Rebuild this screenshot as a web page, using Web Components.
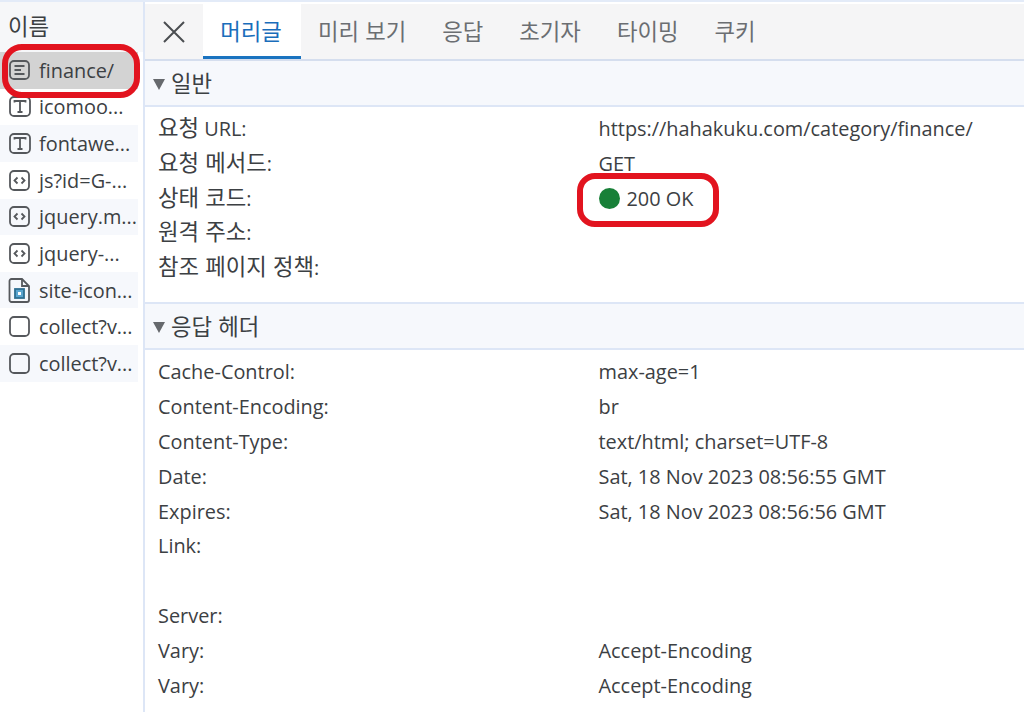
<!DOCTYPE html>
<html lang="ko">
<head>
<meta charset="utf-8">
<title>네트워크</title>
<style>
  html, body { margin: 0; height: 100%; background: #fff; overflow: hidden; }
  body { font-family: "Open Sans", "Noto Sans CJK KR", sans-serif; font-size: 19.9px; color: #3c4043; }
</style>
</head>
<body>
<net-panel></net-panel>

<script>
const ICONS = {
  doc: '<rect x="2" y="2" width="19" height="18" rx="4"/><path d="M6.5 7h10M6.5 11h6.500M6.5 15h10"/>',
  font: '<rect x="2" y="2" width="20" height="19" rx="4"/><path d="M6.5 7.500V6h11v1.500M12 6V17M9.500 17h5"/>',
  script: '<rect x="2" y="2" width="19" height="19" rx="4"/><path d="M9.500 8.500l-3 3 3 3M13.500 8.500l3 3-3 3"/>',
  blank: '<rect x="2" y="2" width="19" height="19" rx="4"/>',
  image: '<path d="M1.500 4a2 2 0 0 1 2-2h10.500l7 7v14a2 2 0 0 1-2 2H3.500a2 2 0 0 1-2-2z"/><path d="M14 2v7h7"/><rect x="7" y="12" width="9" height="9" fill="#5aa6d0" stroke="#2f6f91" stroke-width="1.800"/><rect x="10" y="15" width="3" height="3" fill="#fff" stroke="none"/>'
};

// hangul runs are set larger so they keep the proportions of the latin text
const ko = (s) => s.replace(/[\uac00-\ud7a3]+( [\uac00-\ud7a3]+)*/g, (m) => `<span class="ko">${m}</span>`);

class NetRow extends HTMLElement {
  constructor() {
    super();
    this.attachShadow({ mode: 'open' });
  }
  connectedCallback() {
    const icon = this.getAttribute('icon') || 'blank';
    const tall = icon === 'image';
    this.shadowRoot.innerHTML = `
      <style>
        :host { display: flex; align-items: center; gap: 8px; height: 36.65px; padding-left: 8px; box-sizing: border-box; white-space: nowrap; overflow: hidden; }
        :host([alt]) { background: #f6f8fc; }
        :host([selected]) { background: #d3d3d3; }
        svg { flex: none; fill: none; stroke: #55585c; stroke-width: 1.800; width: 23px; height: ${tall ? 27 : 23}px; }
      </style>
      <svg viewBox="0 0 23 ${tall ? 27 : 23}">${ICONS[icon]}</svg>
      <slot></slot>`;
  }
}
customElements.define('net-row', NetRow);

class NetTab extends HTMLElement {
  constructor() {
    super();
    this.attachShadow({ mode: 'open' });
    this.shadowRoot.innerHTML = `
      <style>
        :host { display: flex; align-items: center; justify-content: center; height: 100%; padding: 0 18px 4px; box-sizing: border-box; color: #6b6e72; font-family: "Noto Sans CJK KR", sans-serif; font-size: 22.300px; }
        :host([active]) { background: #fff; color: #1a6dbb; border-bottom: 3px solid #1a73c0; width: 98px; padding: 0 2px 1px 0; margin-right: -1px; position: relative; }
      </style>
      <slot></slot>`;
  }
}
customElements.define('net-tab', NetTab);

class NetSection extends HTMLElement {
  constructor() {
    super();
    this.attachShadow({ mode: 'open' });
    this.shadowRoot.innerHTML = `
      <style>
        :host { display: block; }
        .head { display: flex; align-items: center; gap: 6px; height: 42px; padding: 0 0 2px 8px; background: #f6f8fc; border-bottom: 2px solid #dde6f6; color: #3c4043; }
        .tri { width: 0; height: 0; border: 6.500px solid transparent; border-top: 11px solid #66696d; border-bottom: 0; margin-top: 5px; }
        .body { padding: 4px 0 0 13px; }
      </style>
      <div class="head"><span class="tri"></span><slot name="title"></slot></div>
      <div class="body"><slot></slot></div>`;
  }
}
customElements.define('net-section', NetSection);

class NetField extends HTMLElement {
  constructor() {
    super();
    this.attachShadow({ mode: 'open' });
    this.shadowRoot.innerHTML = `
      <style>
        :host { display: grid; grid-template-columns: 440.500px 1fr; align-items: center; height: 34.85px; white-space: nowrap; color: #3c4043; }
        .dot { display: inline-block; width: 21px; height: 21px; border-radius: 50%; background: #188038; margin-right: 7px; vertical-align: -3px; }
      </style>
      <div><slot name="k"></slot></div>
      <div id="v"><slot name="v"></slot></div>`;
  }
  connectedCallback() {
    if (this.hasAttribute('ok')) {
      const dot = document.createElement('span');
      dot.className = 'dot';
      this.shadowRoot.getElementById('v').prepend(dot);
    }
  }
}
customElements.define('net-field', NetField);

class NetPanel extends HTMLElement {
  constructor() {
    super();
    this.attachShadow({ mode: 'open' });
    const f = (k, v, extra) => `<net-field ${extra || ''}><span slot="k">${ko(k)}</span><span slot="v">${v}</span></net-field>`;
    this.shadowRoot.innerHTML = `
      <style>
        :host { display: grid; grid-template-columns: 145px 1fr; width: 1024px; height: 712px; overflow: hidden; position: relative; border-top: 2px solid #e3ebf8; box-sizing: border-box; }
        .side { border-right: 2px solid #dde6f6; padding-right: 5px; }
        .name { height: 50px; padding: 0 0 3px 8px; margin-right: -5px; box-sizing: border-box; background: #f6f7f9; display: flex; align-items: center; color: #3c4043; }
        .ko { font-family: "Noto Sans CJK KR", sans-serif; font-size: 22.300px; line-height: 1; }
        .main { min-width: 0; }
        .tabs { display: flex; align-items: stretch; height: 55px; margin-top: 2px; background: #f5f5f6; border-bottom: 2px solid #d5deee; }
        .close { flex: none; width: 58px; display: flex; align-items: center; justify-content: center; }
        .close svg { width: 26px; height: 26px; stroke: #4a4d51; stroke-width: 2; fill: none; }
        .gap { height: 17px; }
        .ring { position: absolute; border: 6px solid #e2141f; box-sizing: border-box; pointer-events: none; }
      </style>
      <div class="side">
        <div class="name"><span class="ko">이름</span></div>
        <net-row icon="doc" selected>finance/</net-row>
        <net-row icon="font">icomoo...</net-row>
        <net-row icon="font" alt>fontawe...</net-row>
        <net-row icon="script">js?id=G-...</net-row>
        <net-row icon="script" alt>jquery.m...</net-row>
        <net-row icon="script">jquery-...</net-row>
        <net-row icon="image" alt>site-icon...</net-row>
        <net-row icon="blank">collect?v...</net-row>
        <net-row icon="blank" alt>collect?v...</net-row>
      </div>
      <div class="main">
        <div class="tabs">
          <div class="close"><svg viewBox="0 0 26 26"><path d="M3 3l20 20M23 3L3 23"/></svg></div>
          <net-tab active>머리글</net-tab>
          <net-tab>미리 보기</net-tab>
          <net-tab>응답</net-tab>
          <net-tab>초기자</net-tab>
          <net-tab>타이밍</net-tab>
          <net-tab>쿠키</net-tab>
        </div>
        <net-section>
          <span slot="title" class="ko">일반</span>
          ${f('요청 URL:', 'https://hahakuku.com/category/finance/')}
          ${f('요청 메서드:', 'GET')}
          ${f('상태 코드:', '200 OK', 'ok')}
          ${f('원격 주소:', '')}
          ${f('참조 페이지 정책:', '')}
          <div class="gap"></div>
        </net-section>
        <div style="border-top:2px solid #dde6f6"></div>
        <net-section>
          <span slot="title" class="ko">응답 헤더</span>
          ${f('Cache-Control:', 'max-age=1')}
          ${f('Content-Encoding:', 'br')}
          ${f('Content-Type:', 'text/html; charset=UTF-8')}
          ${f('Date:', 'Sat, 18 Nov 2023 08:56:55 GMT')}
          ${f('Expires:', 'Sat, 18 Nov 2023 08:56:56 GMT')}
          ${f('Link:', '')}
          ${f('', '')}
          ${f('Server:', '')}
          ${f('Vary:', 'Accept-Encoding')}
          ${f('Vary:', 'Accept-Encoding')}
        </net-section>
      </div>
      <div class="ring" style="left:2px;top:42px;width:138px;height:54px;border-radius:20px"></div>
      <div class="ring" style="left:577px;top:171px;width:142px;height:54px;border-radius:18px"></div>`;
  }
}
customElements.define('net-panel', NetPanel);
</script>
</body>
</html>
